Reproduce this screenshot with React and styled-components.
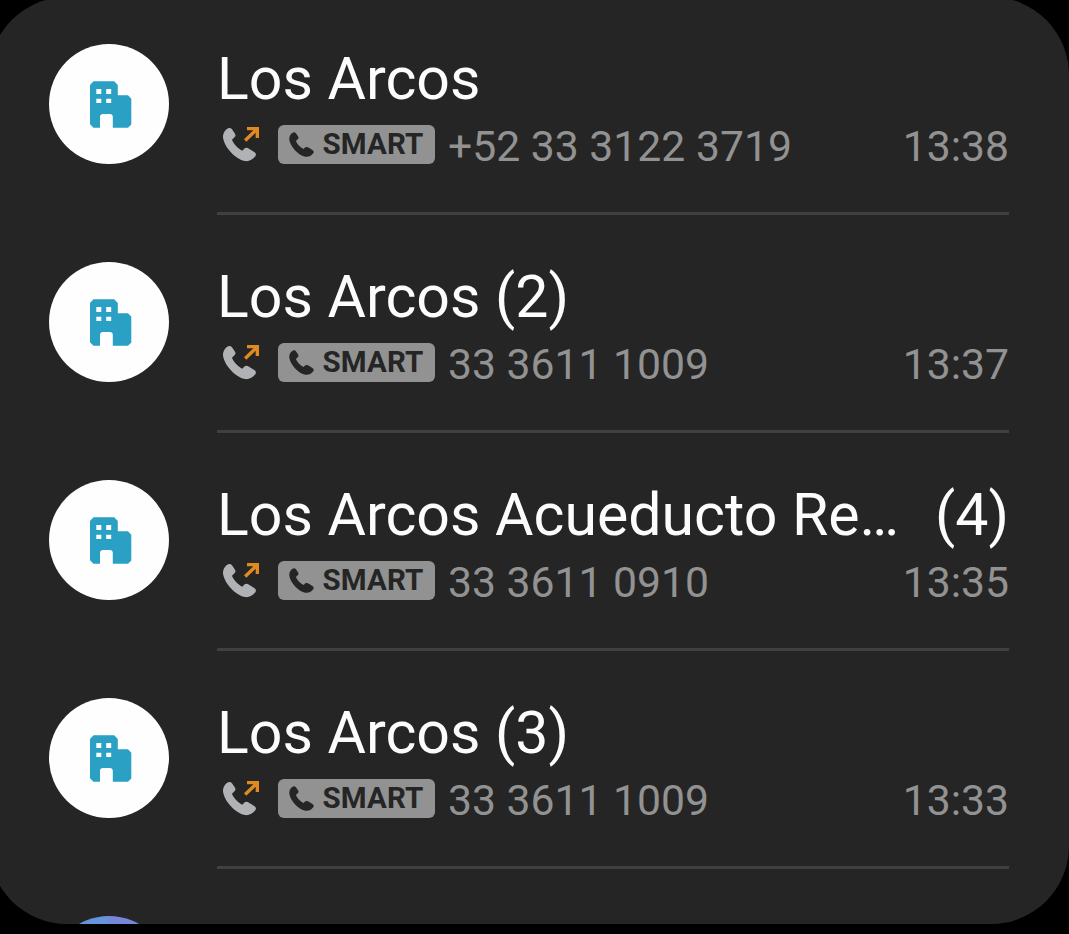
import React from "react";
import styled, { createGlobalStyle } from "styled-components";

const GlobalStyle = createGlobalStyle`
  * { box-sizing: border-box; }
  html, body { margin: 0; background: #000; overflow: hidden; }
  body { font-family: Roboto, "Liberation Sans", sans-serif; }
`;

const Screen = styled.main`
  width: 1069px;
  height: 934px;
  background: #000;
  overflow: hidden;
  display: flex;
`;

const Card = styled.section`
  flex: none;
  width: 1080px;
  height: 927px;
  margin: -3px 0 0 -11px;
  padding: 0 60px;
  border-radius: 78px;
  background: #252525;
  overflow: hidden;
`;

const Row = styled.article`
  display: flex;
  height: 218px;
`;

const Avatar = styled.div`
  flex: none;
  width: 120px;
  height: 120px;
  margin: 47px 48px 0 0;
  border-radius: 50%;
  overflow: hidden;
  background: ${(p) => p.$fill || "#fefefe"};
`;

const Body = styled.div`
  width: 792px;
  border-bottom: 3px solid #404040;
  padding-top: 47px;
`;

const TitleLine = styled.div`
  display: flex;
  justify-content: space-between;
  height: 70px;
  line-height: 70px;
  font-size: 59px;
  color: #fcfcfc;
  white-space: pre;
`;

const Details = styled.div`
  display: flex;
  align-items: center;
  height: 60px;
  margin-top: 2px;
  font-size: 42.7px;
  line-height: 60px;
  color: #929292;
  white-space: pre;
`;

const CallIcon = styled.svg`
  flex: none;
  width: 38px;
  height: 36px;
  margin: -4px 18px 0 5px;
`;

const Badge = styled.span`
  display: flex;
  align-items: center;
  flex: none;
  width: 157px;
  height: 39px;
  margin: -3px 13px 0 0;
  padding-left: 11px;
  border-radius: 6px;
  background: #929292;
  color: #252525;
  font-size: 29.5px;
  font-weight: 700;
  letter-spacing: 0.1px;
  line-height: 39px;
`;

const BadgeIcon = styled.svg`
  width: 25px;
  height: 25px;
  margin-right: 8.6px;
`;

const Time = styled.time`
  margin-left: auto;
`;

const HANDSET =
  "M57 54C60 53 64 55 66 58L75 71C77 75 77 78 74 81L66 89C70 101 83 114 97 122L104 115C107 112 113 113 117 116L134 127C138 130 139 135 136 139C128 150 116 155 104 153C78 149 42 112 39 82C39 68 46 58 57 54Z";

const Building = () => (
  <svg viewBox="0 0 120 120" width="120" height="120">
    <path
      fill="#2aa0c4"
      fillRule="evenodd"
      d="M44.5 37.3H65.2L68.8 41V51.3H79L82.3 54.8V80.5L79 83.7H63.8V73Q63.8 70 60.8 70H54Q51 70 51 73V83.7H44.5L41 80.2V41Z M47.3 45V50H52.3V45Z M57.2 45V50H62.2V45Z M47.3 54.7V59H52.3V54.7Z M57.2 54.7V59H62.2V54.7Z"
    />
  </svg>
);

const calls = [
  { name: "Los Arcos", number: "+52 33 3122 3719", time: "13:38" },
  { name: "Los Arcos (2)", number: "33 3611 1009", time: "13:37" },
  { name: "Los Arcos Acueducto Re…", count: "(4)", number: "33 3611 0910", time: "13:35" },
  { name: "Los Arcos (3)", number: "33 3611 1009", time: "13:33" },
];

export default function App() {
  return (
    <Screen>
      <GlobalStyle />
      <Card>
        {calls.map((call) => (
          <Row key={call.time}>
            <Avatar>
              <Building />
            </Avatar>
            <Body>
              <TitleLine>
                <span>{call.name}</span>
                {call.count && <span>{call.count}</span>}
              </TitleLine>
              <Details>
                <CallIcon viewBox="36 48 114 108">
                  <path fill="#b0b2b5" d={HANDSET} />
                  <path fill="#e08a22" d="M111 51H147V84H137V68L109 95L102 88L130 61H111Z" />
                </CallIcon>
                <Badge>
                  <BadgeIcon viewBox="38 53 101 101">
                    <path fill="#252525" d={HANDSET} />
                  </BadgeIcon>
                  SMART
                </Badge>
                <span>{call.number}</span>
                <Time>{call.time}</Time>
              </Details>
            </Body>
          </Row>
        ))}
        <Row>
          <Avatar $fill="linear-gradient(90deg, #6593dc 49%, #7687da 51%)" />
        </Row>
      </Card>
    </Screen>
  );
}
